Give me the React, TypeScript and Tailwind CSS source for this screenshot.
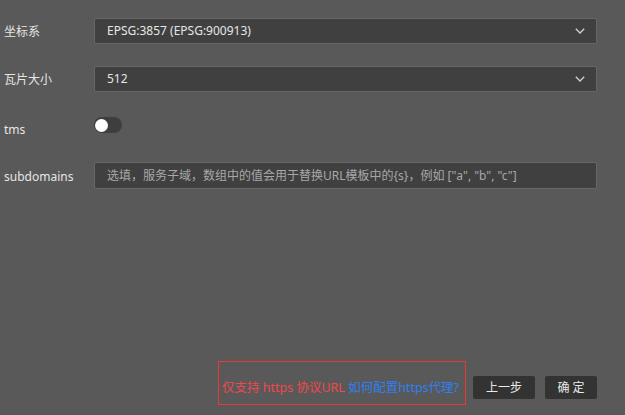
import React from "react";

const font = { fontFamily: '"Noto Sans", "Noto Sans CJK SC", sans-serif' };

function Chevron() {
  return (
    <svg width="10" height="6" viewBox="0 0 10 6" className="shrink-0">
      <polyline points="0.8,0.8 5,5 9.2,0.8" fill="none" stroke="#d0d0d0" strokeWidth="1.3" />
    </svg>
  );
}

function Select({ value }: { value: string }) {
  return (
    <div className="flex-1 h-[26px] flex items-center justify-between bg-[#404040] border border-[#676767] rounded-[2px] pl-[12px] pr-[11px] text-[12px] text-[#e6e6e6]">
      <span>{value}</span>
      <Chevron />
    </div>
  );
}

export default function App() {
  return (
    <div style={font} className="w-[625px] h-[415px] bg-[#595959] flex flex-col overflow-hidden">
      <div className="pt-[18px] pr-[28px] flex flex-col">
        <div className="flex items-center h-[26px]">
          <div className="w-[94px] pl-[4px] pt-[2px] text-[12px] text-[#e6e6e6]">坐标系</div>
          <Select value="EPSG:3857 (EPSG:900913)" />
        </div>
        <div className="flex items-center h-[26px] mt-[22px]">
          <div className="w-[94px] pl-[4px] pt-[2px] text-[12px] text-[#e6e6e6]">瓦片大小</div>
          <Select value="512" />
        </div>
        <div className="flex items-start h-[26px] mt-[25px]">
          <div className="w-[94px] pl-[4px] mt-[4px] leading-[17px] text-[12px] text-[#e6e6e6]">tms</div>
          <div className="w-[28px] h-[16px] rounded-full bg-[#3e3e3e] flex items-center pl-[1px]">
            <div className="w-[13px] h-[13px] rounded-full bg-white" />
          </div>
        </div>
        <div className="flex items-center h-[27px] mt-[19px]">
          <div className="w-[94px] pl-[4px] pt-[2px] text-[12px] text-[#e6e6e6]">subdomains</div>
          <div className="flex-1 h-[27px] flex items-center bg-[#404040] border border-[#676767] rounded-[2px] pl-[12px] text-[12px] text-[#a8a8a8]">
            选填，服务子域，数组中的值会用于替换URL模板中的{"{s}"}，例如 ["a", "b", "c"]
          </div>
        </div>
      </div>
      <div className="mt-auto flex justify-end items-end pr-[28px] pb-[10px]">
        <div className="w-[248px] h-[44px] border border-[#e8383c] flex items-end pl-[3px] pb-[8px] text-[12.5px] leading-[17px] whitespace-pre">
          <span className="text-[#f0484c]">仅支持 https 协议URL </span>
          <span className="text-[#2f7ff2]">如何配置https代理?</span>
        </div>
        <div className="flex gap-[10px] ml-[7px] mb-[6px]">
          <button className="w-[62px] h-[23px] rounded-[2px] bg-[#333333] text-[12px] text-[#eaeaea]">上一步</button>
          <button className="w-[52px] h-[23px] rounded-[2px] bg-[#333333] text-[12px] text-[#eaeaea] tracking-[3px] pl-[3px]">确定</button>
        </div>
      </div>
    </div>
  );
}
